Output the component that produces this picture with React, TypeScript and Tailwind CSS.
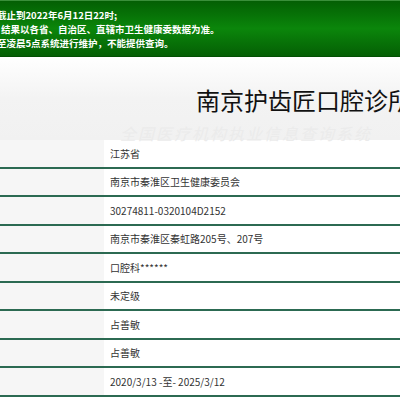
import React from 'react';

const rows = [
  '江苏省',
  '南京市秦淮区卫生健康委员会',
  '30274811-0320104D2152',
  '南京市秦淮区秦虹路205号、207号',
  '口腔科******',
  '未定级',
  '占善敏',
  '占善敏',
  '2020/3/13 -至- 2025/3/12',
];

export default function App() {
  return (
    <div
      className="w-[400px] h-[397px] overflow-hidden bg-white"
      style={{ fontFamily: '"Noto Sans CJK SC", "Microsoft YaHei", sans-serif' }}
    >
      {/* notice banner */}
      <div className="h-[57px] border-t border-[#3a8f3a] border-b border-b-[#045004] bg-gradient-to-b from-[#045f04] via-[#0b860b] to-[#055f05] pt-[7px] text-[9.5px] leading-[14px] text-white font-bold">
        <p className="-ml-[3px] whitespace-nowrap">截止到2022年6月12日22时;</p>
        <p className="ml-[1px] whitespace-nowrap">结果以各省、自治区、直辖市卫生健康委数据为准。</p>
        <p className="-ml-[3px] whitespace-nowrap">至凌晨5点系统进行维护，不能提供查询。</p>
      </div>

      {/* title */}
      <div className="h-[83px] bg-gradient-to-b from-white via-[#f3f3f3] to-[#f1f1f1] pt-[28px] relative">
        <h1 className="ml-[196px] whitespace-nowrap text-[24px] leading-[30px] text-[#111] font-normal">南京护齿匠口腔诊所</h1>
        <div className="absolute left-[120px] top-[64px] whitespace-nowrap text-[16px] italic text-[#ebebeb] tracking-[2px]">
          全国医疗机构执业信息查询系统
        </div>
      </div>

      {/* table */}
      <div className="grid grid-cols-[104px_1fr]">
        {rows.map((v, i) => (
          <React.Fragment key={i}>
            <div className="h-[28.5px] bg-[#f6f6f6] border-b-2 border-[#2c6a52]" />
            <div className="h-[28.5px] bg-white border-b-2 border-[#2c6a52] flex items-center pl-[6px] text-[10px] text-[#333] whitespace-nowrap">
              {v}
            </div>
          </React.Fragment>
        ))}
      </div>
    </div>
  );
}
